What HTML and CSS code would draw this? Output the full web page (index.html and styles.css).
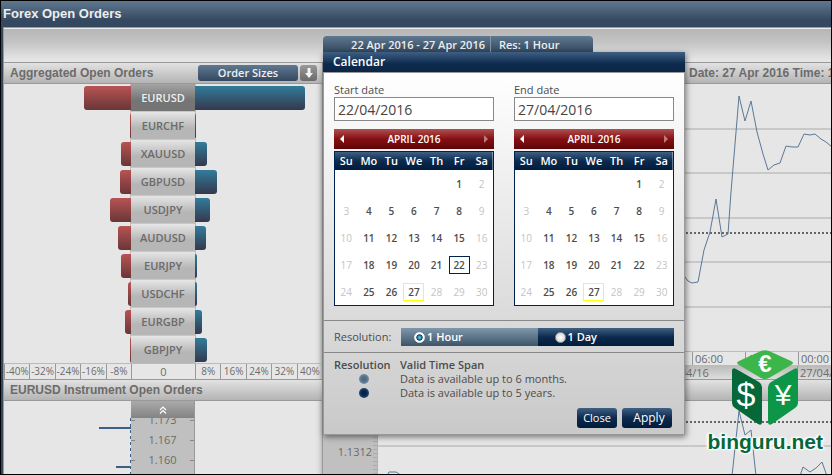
FILE: index.html
```
<!DOCTYPE html>
<html lang="en">
<head>
    <meta charset="UTF-8">
    <meta name="viewport" content="width=device-width, initial-scale=1.0">
    <title>Forex Open Orders</title>
    <link rel="stylesheet" href="styles.css">
</head>
<body>
    <div class="app">
        <h1 class="app-title">Forex Open Orders</h1>
        <div class="workspace">
            <div class="toolbar">
                <button class="range-tab" type="button">
                    <span class="range-dates">22 Apr 2016 - 27 Apr 2016</span>
                    <span class="range-res">Res: 1 Hour</span>
                </button>
            </div>
            <div class="panels">
                <section class="orders">
                    <div class="panel-title">
                        <h2>Aggregated Open Orders</h2>
                        <button class="sizes-btn" type="button">Order Sizes</button>
                        <button class="down-btn" type="button" aria-label="Download">
                            <svg width="10" height="12" viewBox="0 0 10 12"><path d="M3.5 1h3v5H9L5 11 1 6h2.5z" fill="#f4f4f4"/></svg>
                        </button>
                    </div>
                    <div class="bars" id="bars"></div>
                    <div class="scale">
                        <div class="scale-side"><span>-40%</span><span>-32%</span><span>-24%</span><span>-16%</span><span>-8%</span></div>
                        <div class="scale-zero">0</div>
                        <div class="scale-side"><span>8%</span><span>16%</span><span>24%</span><span>32%</span><span>40%</span></div>
                    </div>
                    <div class="panel-title">
                        <h2>EURUSD Instrument Open Orders</h2>
                    </div>
                    <div class="depth">
                        <svg class="depth-lines" width="32" height="75" viewBox="0 0 32 75">
                            <path d="M0 27h32M17 66h15" stroke="#3b5f85" stroke-width="2"/>
                            <path d="M31.5 17v58" stroke="#3b5f85" stroke-dasharray="3 3"/>
                        </svg>
                        <div class="depth-scale">
                            <button class="depth-up" type="button" aria-label="Scroll up">
                                <svg width="8" height="8" viewBox="0 0 8 8"><path d="M1 4l3-3 3 3M1 7.5l3-3 3 3" fill="none" stroke="#fff" stroke-width="1.2"/></svg>
                            </button>
                            <ul class="depth-prices">
                                <li>1.173</li>
                                <li>1.167</li>
                                <li>1.160</li>
                            </ul>
                        </div>
                    </div>
                </section>
                <section class="history">
                    <div class="panel-title panel-title-right">
                        <h2>Date: 27 Apr 2016 Time: 11:00</h2>
                    </div>
                    <div class="chart chart-price">
                        <div class="gutter"></div>
                        <svg width="454" height="267" viewBox="0 0 454 267">
                            <path d="M0 45h454M0 89h454M0 134h454M0 178h454M0 223h454" stroke="#c8c8c8" stroke-width="2"/>
                            <path d="M0 149h454" stroke="#666" stroke-width="2" stroke-dasharray="2 2"/>
                            <polyline points="295,170 302,188 307,193 310,197 314,199 320,198 326,166 332,148 338,115 344,153 350,150 353,108 361,12 367,37 373,17 379,48 385,70 390,86 396,81 402,79 408,62 414,63 420,63 426,50 432,51 437,50 443,55 448,58 454,63" fill="none" stroke="#5b7896"/>
                        </svg>
                    </div>
                    <div class="time-axis">
                        <span>06:00</span><span>12:00</span><span>00:00</span>
                    </div>
                    <div class="date-axis">
                        <span>26/04/16</span><span>27/04/16</span>
                    </div>
                    <div class="panel-title"></div>
                    <div class="chart chart-ratio">
                        <div class="gutter gutter-ticks"><span>1.1312</span></div>
                        <svg width="454" height="75" viewBox="0 0 454 75">
                            <path d="M0 45h454" stroke="#c8c8c8" stroke-width="2"/>
                            <path d="M0 21h454" stroke="#666" stroke-width="2" stroke-dasharray="2 2"/>
                            <path d="M9 75l2-4h7l6 4M354 75l7-65 6 24 6-5 5 46M422 75l3-9 7 5 6-4 6-6 5 14" fill="none" stroke="#5b7896"/>
                        </svg>
                    </div>
                </section>
            </div>
        </div>

        <form class="dialog" role="dialog" aria-labelledby="dialog-title">
            <h2 class="dialog-title" id="dialog-title">Calendar</h2>
            <div class="dates">
                <div class="date-col">
                    <label for="start">Start date</label>
                    <input class="date-input" type="text" id="start" value="22/04/2016">
                    <div class="month">
                        <button type="button" class="prev" aria-label="Previous month"></button>
                        <span>APRIL 2016</span>
                        <button type="button" class="next" aria-label="Next month"></button>
                    </div>
                    <table class="days" data-selected="22"></table>
                </div>
                <div class="date-col">
                    <label for="end">End date</label>
                    <input class="date-input" type="text" id="end" value="27/04/2016">
                    <div class="month">
                        <button type="button" class="prev" aria-label="Previous month"></button>
                        <span>APRIL 2016</span>
                        <button type="button" class="next" aria-label="Next month"></button>
                    </div>
                    <table class="days"></table>
                </div>
            </div>
            <div class="resolution">
                <span class="resolution-label">Resolution:</span>
                <div class="options">
                    <label class="option option-hour"><input type="radio" name="res" checked>1 Hour</label>
                    <label class="option option-day"><input type="radio" name="res">1 Day</label>
                </div>
            </div>
            <div class="legend">
                <div class="legend-row legend-head"><span>Resolution</span><span>Valid Time Span</span></div>
                <div class="legend-row"><i class="dot dot-hour"></i><span>Data is available up to 6 months.</span></div>
                <div class="legend-row"><i class="dot dot-day"></i><span>Data is available up to 5 years.</span></div>
            </div>
            <div class="actions">
                <button type="button" class="btn">Close</button>
                <button type="button" class="btn btn-apply">Apply</button>
            </div>
        </form>

        <a class="brand" href="#">
            <svg width="68" height="76" viewBox="0 0 68 76">
                <path d="M8 11L30 1q4-1.5 8 0l22 10q4 2 0 4L38 28q-4 2-8 0L8 15q-4-2 0-4z" fill="#3cb54a"/>
                <path d="M1 21q0-4 4-2l23 13q3 2 3 5v35q0 4-4 2L4 58q-3-2-3-5z" fill="#066839"/>
                <path d="M67 21q0-4-4-2L40 32q-3 2-3 5v35q0 4 4 2l23-16q3-2 3-5z" fill="#0d9648"/>
                <text x="34" y="22" class="coin coin-euro">€</text>
                <text x="15" y="56" class="coin coin-dollar">$</text>
                <text x="52" y="55" class="coin coin-yen">¥</text>
            </svg>
            <span>binguru.net</span>
        </a>
    </div>

    <script>
        // Share of open orders in pixels: [pair, sell, buy]
        const orders = [
            ['EURUSD', 47, 110],
            ['EURCHF', 1, 1],
            ['XAUUSD', 10, 12],
            ['GBPUSD', 11, 22],
            ['USDJPY', 21, 15],
            ['AUDUSD', 13, 11],
            ['EURJPY', 10, 2],
            ['USDCHF', 3, 2],
            ['EURGBP', 6, 7],
            ['GBPJPY', 1, 12]
        ];

        document.getElementById('bars').innerHTML = orders
            .map(([pair, sell, buy], i) => `
                <div class="bar-row">
                    <div class="bar-side bar-side-left"><div class="bar sell" style="width: ${sell}px"></div></div>
                    <button type="button" class="pair ${i === 0 ? 'active' : ''}">${pair}</button>
                    <div class="bar-side"><div class="bar buy" style="width: ${buy}px"></div></div>
                </div>
            `)
            .join('');

        // April 2016 starts on a Friday
        document.querySelectorAll('.days').forEach(table => {
            let html = '<thead><tr>' + ['Su', 'Mo', 'Tu', 'We', 'Th', 'Fr', 'Sa'].map(d => `<th>${d}</th>`).join('') + '</tr></thead><tbody>';
            for (let week = 0; week < 5; week++) {
                html += '<tr>';
                for (let d = 0; d < 7; d++) {
                    const day = week * 7 + d - 4;
                    let cls = d === 0 || d === 6 || day > 27 ? 'off' : '';
                    if (day === 27) cls = 'today';
                    if (String(day) === table.dataset.selected) cls = 'selected';
                    html += `<td class="${cls}">${day > 0 ? `<span>${day}</span>` : ''}</td>`;
                }
                html += '</tr>';
            }
            table.innerHTML = html + '</tbody>';
        });
    </script>
</body>
</html>
```
FILE: styles.css
```
:root {
    --ui: "Trebuchet MS", "Open Sans", sans-serif;
    --line: #999;
    --panel: #e6e6e6;
    --text: #4c4c4c;
    --muted: #6b6b6b;
    --navy: linear-gradient(#3f6083, #0c2a4d 50%, #001c3c);
    --steel: linear-gradient(#5f7890, #34495f);
    --silver: linear-gradient(#e2e2e2, #b4b4b4);
}

* {
    box-sizing: border-box;
}

body {
    margin: 0;
    font-family: var(--ui);
    font-size: 11px;
    color: var(--text);
}

h1, h2 {
    margin: 0;
}

button {
    border: 0;
    padding: 0;
    font-family: inherit;
    cursor: pointer;
}

.app {
    position: relative;
    display: flex;
    flex-direction: column;
    height: 100vh;
    border: 1px solid #000;
    background: #34495f;
    overflow: hidden;
}

.app-title {
    flex: none;
    height: 26px;
    padding-left: 2px;
    background: linear-gradient(#5f7890, #34495f 75%);
    color: #eee;
    font: bold 13px/25px "Liberation Sans", sans-serif;
}

.workspace {
    flex: 1;
    min-height: 0;
    display: flex;
    flex-direction: column;
    margin-left: 2px;
    border: 1px solid var(--line);
    border-width: 1px 0 0 1px;
    background: var(--panel);
}

.toolbar {
    flex: none;
    display: flex;
    align-items: flex-end;
    height: 34px;
    padding: 0 0 10px 319px;
    border-top: 1px solid #eee;
    background: linear-gradient(#b6b6b6, #c4c4c4 40%, #e6e6e6 95%);
}

.range-tab {
    display: flex;
    width: 270px;
    height: 16px;
    border-radius: 4px 4px 0 0;
    background: var(--steel);
    color: #eee;
    font: 600 11px/18px var(--ui);
}

.range-dates {
    width: 168px;
    padding-right: 5px;
    border-right: 1px solid #8295a6;
    text-align: right;
    white-space: nowrap;
}

.range-res {
    padding-left: 8px;
}

.panels {
    flex: 1;
    min-height: 0;
    display: grid;
    grid-template-columns: 319px 1fr;
}

.orders,
.history {
    min-width: 0;
    min-height: 0;
    display: flex;
    flex-direction: column;
    overflow: hidden;
}

.orders {
    border-right: 1px solid var(--line);
    box-shadow: inset -6px 0 5px -5px #aaa;
}

.panel-title {
    flex: none;
    display: flex;
    align-items: center;
    height: 22px;
    padding: 0 5px 0 6px;
    border: 1px solid var(--line);
    border-width: 1px 0;
    background: var(--silver);
    color: var(--muted);
}

.panel-title h2 {
    flex: 1;
    font: bold 12px/18px "Liberation Sans", sans-serif;
    white-space: nowrap;
}

.panel-title-right h2 {
    padding-left: 360px;
}

.sizes-btn {
    width: 100px;
    height: 16px;
    border-radius: 3px;
    background: var(--steel);
    color: #f0f0f0;
    font: 600 11px/16px var(--ui);
}

.down-btn {
    display: flex;
    align-items: center;
    justify-content: center;
    width: 17px;
    height: 16px;
    margin-left: 2px;
    border-radius: 3px;
    background: linear-gradient(#999, #6a6a6a);
}

.bar-row {
    display: grid;
    grid-template-columns: 1fr 64px 1fr;
    height: 28px;
}

.bar-side {
    padding-top: 2px;
    border-left: 1px solid #bbb;
}

.bar-side-left {
    display: flex;
    justify-content: flex-end;
    border-left: 0;
    border-right: 1px solid #bbb;
}

.bar {
    height: 24px;
}

.sell {
    margin-right: -1px;
    border-radius: 3px 0 0 3px;
    background: linear-gradient(#b85354, #6a3637);
}

.buy {
    margin-left: -1px;
    border-radius: 0 3px 3px 0;
    background: linear-gradient(#317c9c, #34394d);
}

.pair {
    border-bottom: 1px solid #c8c8c8;
    background: linear-gradient(#e6e6e6, #b6b6b6 60%);
    color: var(--muted);
    font: 600 11px/26px var(--ui);
}

.pair.active {
    background: linear-gradient(#a4a4a4, #757575 60%);
    color: #eee;
}

.scale {
    flex: none;
    display: grid;
    grid-template-columns: 1fr 64px 1fr;
    height: 15px;
    box-shadow: 0 -1px #bbb;
    line-height: 15px;
    color: var(--muted);
    text-align: center;
}

.scale-side {
    display: flex;
}

.scale-side span {
    flex: 1 1 0;
    min-width: 0;
    border-left: 1px solid var(--line);
    font-size: 10px;
}

.scale-zero {
    border-left: 1px solid var(--line);
}

.depth {
    flex: 1;
    min-height: 0;
    display: grid;
    grid-template-columns: 1fr 64px 1fr;
}

.depth-lines {
    justify-self: end;
}

.depth-scale {
    background: #c0c0c0;
    border-right: 1px solid var(--line);
    overflow: hidden;
}

.depth-up {
    position: relative;
    display: flex;
    align-items: center;
    justify-content: center;
    width: 100%;
    height: 17px;
    background: linear-gradient(#aaa, #838383);
}

.depth-prices {
    margin: -8px 0 0;
    padding: 0;
    list-style: none;
    text-align: center;
    line-height: 20px;
    color: var(--muted);
}

.depth-prices li {
    background: linear-gradient(#888, #888) left center / 4px 1px no-repeat, linear-gradient(#888, #888) right center / 4px 1px no-repeat;
}

.chart {
    display: flex;
    overflow: hidden;
}

.chart svg {
    flex: none;
}

.chart-price {
    flex: none;
    height: 267px;
}

.chart-ratio {
    flex: 1;
    min-height: 0;
}

.gutter {
    flex: none;
    width: 55px;
    background: #c0c0c0;
    border-right: 1px solid #b0b0b0;
}

.gutter-ticks {
    padding: 42px 5px 0 0;
    background: repeating-linear-gradient(#aaa 0 1px, transparent 1px 4px) right / 4px 100% no-repeat, #c0c0c0;
    color: var(--muted);
    line-height: 18px;
    text-align: right;
}

.time-axis,
.date-axis {
    flex: none;
    display: flex;
    height: 14px;
    padding-left: 369px;
    border-top: 1px solid #bbb;
    overflow: hidden;
    color: var(--muted);
    line-height: 14px;
}

.time-axis span {
    flex: none;
    width: 53px;
    padding-left: 2px;
    border-left: 1px solid var(--line);
}

.date-axis {
    padding-left: 340px;
    background: linear-gradient(#bbb, #ddd);
}

.date-axis span {
    flex: none;
    width: 134px;
    white-space: nowrap;
}

.date-axis span + span {
    padding-left: 2px;
    border-left: 1px solid var(--line);
}

/* Calendar dialog */
.dialog {
    position: absolute;
    top: 51px;
    left: 322px;
    width: 362px;
    border: 1px solid var(--line);
    border-top: 0;
    background: linear-gradient(#fff 20px, #c9c9c9);
    box-shadow: 1px 2px 6px rgba(0, 0, 0, 0.5);
}

.dialog-title {
    height: 21px;
    margin: 0 -1px;
    padding-left: 10px;
    border-bottom: 1px solid var(--line);
    background: linear-gradient(#3f6083, #0c2a4d 60%, #0c2747);
    color: #fff;
    font: 600 12px/20px var(--ui);
}

.dates {
    display: flex;
    gap: 20px;
    padding: 10px 10px 14px;
}

.date-col {
    flex: 1;
}

.date-col label {
    display: block;
    line-height: 14px;
}

.date-input {
    display: block;
    width: 100%;
    height: 24px;
    padding: 0 3px;
    border: 1px solid #888;
    background: #fff;
    color: #444;
    font: 14px/22px var(--ui);
}

.month {
    display: flex;
    align-items: center;
    justify-content: space-between;
    height: 20px;
    margin: 8px 0 2px;
    padding: 0 6px;
    background: linear-gradient(#b05050, #850f12 50%, #5e0507);
    color: #fff;
    font-weight: 600;
    font-size: 10px;
}

.prev,
.next {
    width: 0;
    height: 0;
    border: 4px solid transparent;
    border-right-color: #fff;
    border-left-width: 0;
    background: none;
}

.next {
    border: 4px solid transparent;
    border-left-color: #bd7b7b;
    border-right-width: 0;
}

.days {
    table-layout: fixed;
    width: 100%;
    border: 1px solid #00234d;
    border-spacing: 0;
    background: #fff;
    font-weight: 600;
    font-size: 10px;
    text-align: center;
}

.days thead {
    background: var(--navy);
}

.days th {
    height: 18px;
    padding: 0;
    color: #fff;
    font-size: 11px;
    font-weight: 600;
    line-height: 18px;
}

.days td {
    height: 27px;
    padding: 0;
}

.days td span {
    display: block;
    width: 21px;
    margin: 0 auto;
    border: 1px solid transparent;
    line-height: 16px;
}

.days .off {
    color: #c4c4c4;
    font-weight: 400;
}

.days .today span {
    border-color: #ff0;
}

.days .selected span {
    border-color: #00234d;
}

.resolution {
    display: grid;
    grid-template-columns: 67px 1fr;
    align-items: center;
    height: 33px;
    padding: 0 10px;
    border: 1px solid #888;
    border-width: 1px 0;
}

.options {
    display: grid;
    grid-template-columns: 1fr 1fr;
}

.option {
    display: flex;
    align-items: center;
    gap: 2px;
    height: 18px;
    padding-left: 13px;
    color: #fff;
    font-weight: 600;
    line-height: 16px;
}

.option-hour {
    background: linear-gradient(#7f97ab, #3d5468);
}

.option-day {
    padding-left: 17px;
    background: var(--navy);
}

.option input {
    appearance: none;
    width: 11px;
    height: 11px;
    margin: 2px 0 0;
    border: 1px solid #999;
    border-radius: 50%;
    background: radial-gradient(#fff, #ccc);
}

.option input:checked {
    border-color: #eee;
    background: radial-gradient(#4cc4ee 10%, #0b3d5c 45%, #fff 55%);
}

.legend {
    padding: 5px 10px 0;
}

.legend-row {
    display: grid;
    grid-template-columns: 66px 1fr;
    align-items: center;
    height: 14px;
    line-height: 14px;
    white-space: nowrap;
}

.legend-head {
    font-weight: 600;
}

.dot {
    width: 10px;
    height: 10px;
    margin-left: 25px;
    border-radius: 50%;
}

.dot-hour {
    background: radial-gradient(#4f6b86 30%, #93a6b8);
}

.dot-day {
    background: radial-gradient(#00234d 30%, #48607c);
}

.actions {
    display: flex;
    justify-content: flex-end;
    gap: 5px;
    padding: 8px 12px 6px;
}

.btn {
    width: 40px;
    height: 20px;
    border-radius: 3px;
    background: var(--navy);
    color: #fff;
    font-size: 11px;
    line-height: 20px;
}

.btn-apply {
    width: 50px;
    padding-left: 4px;
    font-size: 12px;
}

/* Site watermark */
.brand {
    position: absolute;
    right: 8px;
    bottom: 17px;
    display: flex;
    flex-direction: column;
    align-items: center;
    color: #066839;
    font: bold 21px/31px "Liberation Sans", sans-serif;
    text-decoration: none;
    text-shadow: 0 0 2px #fff, 1px 1px 2px #fff, -1px -1px 2px #fff, 2px 0 2px #fff, -2px 0 2px #fff;
}

.coin {
    fill: #fff;
    font-family: "Liberation Sans", sans-serif;
    font-weight: normal;
    text-anchor: middle;
    text-shadow: none;
}

.coin-euro {
    font-size: 24px;
    font-weight: bold;
}

.coin-dollar {
    font-size: 34px;
}

.coin-yen {
    font-size: 30px;
}
```
